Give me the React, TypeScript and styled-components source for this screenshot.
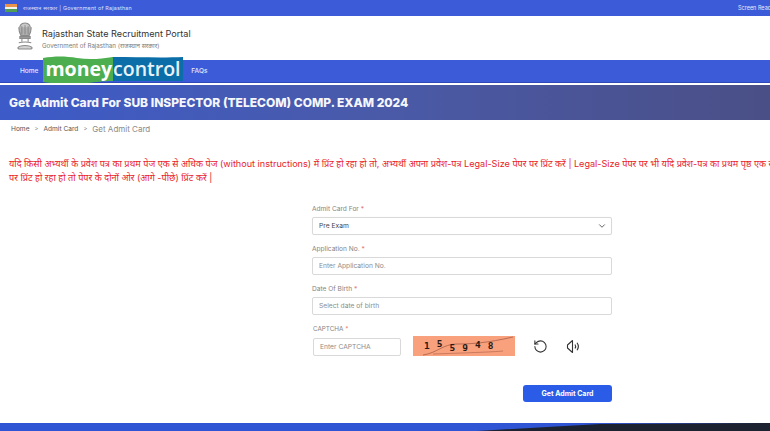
import React from "react";
import styled, { createGlobalStyle } from "styled-components";
import { RotateCcw, ChevronDown } from "lucide-react";

const GlobalStyle = createGlobalStyle`
  html, body {
    margin: 0;
    padding: 0;
    width: 770px;
    height: 431px;
    overflow: hidden;
    background: #fff;
    font-family: "Inter", "Noto Sans", "Liberation Sans", sans-serif;
  }
  * { box-sizing: border-box; }
`;

const captchaDigits = [
  { d: "1", y: -1 },
  { d: "5", y: -3 },
  { d: "5", y: 1 },
  { d: "9", y: 1 },
  { d: "4", y: -2 },
  { d: "8", y: -1 },
];

const App: React.FC = () => {
  return (
    <Page>
      <GlobalStyle />
      <TopBar>
        <TopLeft>
          <Flag>
            <span />
            <span />
            <span />
          </Flag>
          <TopText>राजस्थान सरकार | Government of Rajasthan</TopText>
        </TopLeft>
        <ScreenReader>Screen Reader Access</ScreenReader>
      </TopBar>

      <Header>
        <Emblem viewBox="2 1 16 27">
          <g fill="none" stroke="#8a8a8a" strokeWidth="1">
            <path d="M5 9c-1-4 1-7 5-7s6 3 5 7" fill="#c9c9c9" />
            <path d="M4 6c0 4 1 6 2 8h8c1-2 2-4 2-8" fill="#b0b0b0" />
            <path d="M7 5v8M10 4v9M13 5v8" stroke="#777" strokeWidth="0.7" />
            <path d="M5 15h10v2H5z" fill="#9a9a9a" />
            <path d="M7 17v3M13 17v3" />
            <path d="M4 21c3-1 9-1 12 0" />
            <path d="M3 26c2-3 12-3 14 0l-1 1H4z" fill="#d2d2d2" />
          </g>
        </Emblem>
        <HeaderText>
          <PortalName>Rajasthan State Recruitment Portal</PortalName>
          <GovName>Government of Rajasthan (राजस्थान सरकार)</GovName>
        </HeaderText>
      </Header>

      <Nav>
        <NavLink>Home</NavLink>
        <NavLink $faq>FAQs</NavLink>
        <Logo>
          <LogoWave viewBox="0 0 140 27" preserveAspectRatio="none">
            <path d="M69 1c24 0 50 1 71 0v24H69z" fill="#0b6ea8" />
            <path d="M0 2c12-2 22-2 34 0s24 1 36-1v24c-10 0-16 1-26 2-18 1-32 1-44-1z" fill="#4cae4f" />
          </LogoWave>
          <LogoWords>
            <LogoMoney>money</LogoMoney>
            <LogoControl>control</LogoControl>
          </LogoWords>
        </Logo>
      </Nav>

      <Banner>
        <BannerTitle>Get Admit Card For SUB INSPECTOR (TELECOM) COMP. EXAM 2024</BannerTitle>
      </Banner>

      <Crumbs>
        <Crumb>Home</Crumb>
        <CrumbSep>&gt;</CrumbSep>
        <Crumb>Admit Card</Crumb>
        <CrumbSep>&gt;</CrumbSep>
        <CrumbActive>Get Admit Card</CrumbActive>
      </Crumbs>

      <Notice>
        <NoticeLine>
          यदि किसी अभ्यर्थी के प्रवेश पत्र का प्रथम पेज एक से अधिक पेज (without instructions) में प्रिंट हो रहा हो तो, अभ्यर्थी अपना प्रवेश-पत्र Legal-Size पेपर पर प्रिंट करें | Legal-Size पेपर पर भी यदि प्रवेश-पत्र का प्रथम पृष्ठ एक से अधिक
        </NoticeLine>
        <NoticeLine>पर प्रिंट हो रहा हो तो पेपर के दोनों ओर (आगे -पीछे) प्रिंट करें |</NoticeLine>
      </Notice>

      <Form>
        <Field>
          <Label>Admit Card For <Star>*</Star></Label>
          <SelectBox>
            <span>Pre Exam</span>
            <ChevronDown size={10} color="#444" strokeWidth={2} />
          </SelectBox>
        </Field>
        <Field>
          <Label>Application No. <Star>*</Star></Label>
          <Input placeholder="Enter Application No." readOnly />
        </Field>
        <Field>
          <Label>Date Of Birth <Star>*</Star></Label>
          <Input placeholder="Select date of birth" readOnly />
        </Field>
        <Field>
          <CaptchaLabel>CAPTCHA <Star>*</Star></CaptchaLabel>
          <CaptchaRow>
            <CaptchaInput placeholder="Enter CAPTCHA" readOnly />
            <CaptchaImage>
              <CaptchaLines viewBox="0 0 102 20">
                <path d="M10 19c14-2 20-11 34-11s30-1 56-7" fill="none" stroke="#a8604a" strokeWidth="0.8" />
                <path d="M20 18c30-1 60-2 70-3" fill="none" stroke="#a8604a" strokeWidth="0.6" />
              </CaptchaLines>
              {captchaDigits.map((c, i) => (
                <CaptchaDigit key={i} $y={c.y}>{c.d}</CaptchaDigit>
              ))}
            </CaptchaImage>
            <IconSlot>
              <RotateCcw size={15} color="#333" strokeWidth={1.7} />
            </IconSlot>
            <IconSlot>
              <svg width="15" height="15" viewBox="0 0 15 15" fill="none" stroke="#333" strokeWidth="1.1">
                <path d="M1.5 6v3l5 4.5V1.5z" strokeLinejoin="round" />
                <path d="M9 5.5c.8 1.2.8 2.8 0 4" />
                <path d="M11 3.8c1.6 2.2 1.6 5.2 0 7.4" />
              </svg>
            </IconSlot>
          </CaptchaRow>
        </Field>
        <SubmitRow>
          <SubmitButton>Get Admit Card</SubmitButton>
        </SubmitRow>
      </Form>

      <FooterBar />
    </Page>
  );
};

const Page = styled.div`
  position: relative;
  width: 770px;
  height: 431px;
  overflow: hidden;
  background: #fff;
`;

const TopBar = styled.div`
  height: 16px;
  background: #3c5bd8;
  display: flex;
  align-items: center;
  justify-content: space-between;
  padding: 0 0 0 5px;
  overflow: hidden;
  white-space: nowrap;
`;

const TopLeft = styled.div`
  display: flex;
  align-items: center;
  gap: 6px;
`;

const Flag = styled.div`
  width: 12px;
  height: 8px;
  display: flex;
  flex-direction: column;

  span { flex: 1; }
  span:nth-child(1) { background: #e8924a; }
  span:nth-child(2) { background: #f2f2f2; }
  span:nth-child(3) { background: #4f9e55; }
`;

const TopText = styled.span`
  font-size: 5.4px;
  letter-spacing: 0.2px;
  color: #dfe5fa;
`;

const ScreenReader = styled.span`
  font-size: 5.5px;
  color: #e6eafc;
  margin-right: -27px;
  flex: none;
`;

const Header = styled.header`
  height: 44px;
  background: #fff;
  display: flex;
  align-items: center;
  padding: 0 0 0 16px;
  gap: 8px;
`;

const Emblem = styled.svg`
  width: 18px;
  height: 28px;
  margin-bottom: 4px;
`;

const HeaderText = styled.div`
  display: flex;
  flex-direction: column;
  gap: 3px;
`;

const PortalName = styled.div`
  font-size: 9.1px;
  font-weight: 400;
  line-height: 11px;
  color: #333;
`;

const GovName = styled.div`
  font-size: 6.2px;
  line-height: 7px;
  color: #7b7b7b;
`;

const Nav = styled.nav`
  position: relative;
  height: 23px;
  background: #3c5bd8;
  display: flex;
  align-items: center;
  padding-left: 20px;
  border-bottom: 1px solid #2f49b8;
`;

const NavLink = styled.span<{ $faq?: boolean }>`
  font-size: 6.5px;
  font-weight: 500;
  color: #e4e9fb;
  margin-left: ${(p) => (p.$faq ? "153px" : "0")};
`;

const Logo = styled.div`
  position: absolute;
  left: 43px;
  top: -4px;
  width: 140px;
  height: 27px;
  display: flex;
  align-items: center;
  justify-content: center;
`;

const LogoWave = styled.svg`
  position: absolute;
  inset: 0;
  width: 100%;
  height: 100%;
`;

const LogoWords = styled.div`
  position: relative;
  display: flex;
  font-family: "Open Sans", "Noto Sans", sans-serif;
  font-size: 19.5px;
  line-height: 24px;
  font-weight: 600;
  margin-top: -1px;
`;

const LogoMoney = styled.span`
  color: #fff;
  font-weight: 700;
`;

const LogoControl = styled.span`
  color: #e8f2f8;
  margin-left: 1px;
`;

const Banner = styled.div`
  margin-top: 2px;
  height: 35px;
  background: linear-gradient(90deg, #3c5bc9 0%, #4a5aa8 50%, #4a4f86 100%);
  display: flex;
  align-items: center;
  padding-left: 9px;
`;

const BannerTitle = styled.h1`
  margin: 0;
  font-size: 12px;
  font-weight: 800;
  color: #f5f6fb;
  white-space: nowrap;
`;

const Crumbs = styled.div`
  height: 17px;
  padding: 0 0 0 11px;
  display: flex;
  align-items: center;
  gap: 5px;
`;

const Crumb = styled.span`
  font-size: 6.6px;
  color: #555;
`;

const CrumbSep = styled.span`
  font-size: 6px;
  color: #888;
`;

const CrumbActive = styled.span`
  font-size: 8px;
  color: #8a8a8a;
`;

const Notice = styled.div`
  margin-top: 20px;
  padding-left: 9px;
  width: 770px;
  overflow: hidden;
`;

const NoticeLine = styled.div`
  font-size: 9.1px;
  line-height: 14px;
  color: #e8232a;
  white-space: nowrap;
`;

const Form = styled.form`
  margin: 20px 0 0 312px;
  width: 300px;
  display: flex;
  flex-direction: column;
  gap: 10px;
`;

const Field = styled.div`
  display: flex;
  flex-direction: column;
  gap: 4px;
`;

const Label = styled.label`
  font-size: 6.6px;
  line-height: 8px;
  color: #858585;
`;

const CaptchaLabel = styled(Label)`
  font-size: 6.3px;
  margin-left: 1px;
  margin-bottom: -1px;
`;

const Star = styled.span`
  color: #df7a76;
`;

const SelectBox = styled.div`
  height: 18px;
  border: 1px solid #d9d9d9;
  border-radius: 2px;
  display: flex;
  align-items: center;
  justify-content: space-between;
  padding: 0 4px 0 6px;
  font-size: 6.7px;
  color: #444;
  box-shadow: 0 0 1px rgba(0, 0, 0, 0.08);
`;

const Input = styled.input`
  height: 18px;
  width: 100%;
  border: 1px solid #d9d9d9;
  border-radius: 2px;
  padding: 0 6px;
  font-family: inherit;
  font-size: 6.7px;
  outline: none;

  &::placeholder {
    color: #8c8c8c;
  }
`;

const CaptchaRow = styled.div`
  display: flex;
  align-items: center;
  height: 20px;
`;

const CaptchaInput = styled(Input)`
  width: 88px;
  margin: 2px 0 0 1px;
  flex: none;
`;

const CaptchaImage = styled.div`
  position: relative;
  width: 102px;
  height: 20px;
  margin-left: 12px;
  background: #f9a07d;
  display: flex;
  gap: 7px;
  align-items: center;
  padding-left: 11px;
`;

const CaptchaLines = styled.svg`
  position: absolute;
  inset: 0;
  width: 100%;
  height: 100%;
`;

const CaptchaDigit = styled.span<{ $y: number }>`
  position: relative;
  top: ${(p) => p.$y}px;
  font-family: "DejaVu Sans Mono", "Liberation Mono", monospace;
  font-size: 9.5px;
  font-weight: 700;
  color: #2a1a14;
`;

const IconSlot = styled.div`
  width: 15px;
  height: 15px;
  margin-left: 18px;
  display: flex;

  &:first-of-type {
    margin-left: 19px;
  }
`;

const SubmitRow = styled.div`
  display: flex;
  justify-content: flex-end;
  margin-top: 19px;
`;

const SubmitButton = styled.button`
  width: 89px;
  height: 17px;
  border: none;
  border-radius: 3px;
  background: #2a5ce8;
  color: #fff;
  font-family: inherit;
  font-size: 7px;
  font-weight: 700;
  padding: 0;
`;

const FooterBar = styled.div`
  position: absolute;
  left: 0;
  right: 0;
  bottom: 0;
  height: 8px;
  background: #2f55d4;

  &::after {
    content: "";
    position: absolute;
    inset: 0;
    background: #1d2230;
    clip-path: polygon(477px 8px, 600px 1px, 770px 0, 770px 8px);
  }
`;

export default App;
